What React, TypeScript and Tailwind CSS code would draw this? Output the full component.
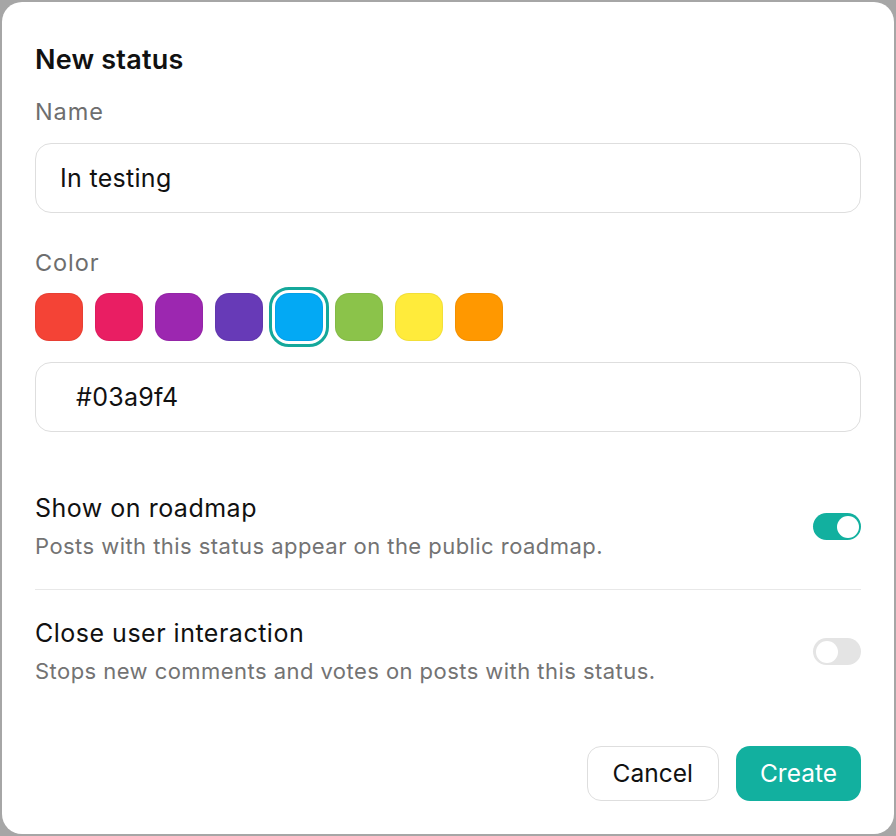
import { useState } from 'react'
import cn from 'clsx'

const swatches = ['#f44336', '#e91e63', '#9c27b0', '#673ab7', '#03a9f4', '#8bc34a', '#ffeb3b', '#ff9800']

function Toggle({ on, onChange }: { on: boolean; onChange: (v: boolean) => void }) {
  return (
    <button
      type="button"
      onClick={() => onChange(!on)}
      className={cn(
        'flex h-[27px] w-[48px] shrink-0 items-center rounded-full px-[2.5px]',
        on ? 'justify-end bg-[#12b09f]' : 'justify-start bg-[#e4e4e4]'
      )}
    >
      <span className="size-[22px] rounded-full bg-white" />
    </button>
  )
}

function SettingRow({
  title,
  description,
  on,
  onChange,
}: {
  title: string
  description: string
  on: boolean
  onChange: (v: boolean) => void
}) {
  return (
    <div className="flex items-center justify-between">
      <div className="flex flex-col gap-[9px]">
        <div className="text-[25px] leading-[30px] tracking-[0.5px] text-[#111]">{title}</div>
        <div className="text-[22px] leading-[28px] tracking-[0.45px] text-[#737373]">{description}</div>
      </div>
      <Toggle on={on} onChange={onChange} />
    </div>
  )
}

export default function App() {
  const [name, setName] = useState('In testing')
  const [color, setColor] = useState('#03a9f4')
  const [roadmap, setRoadmap] = useState(true)
  const [closed, setClosed] = useState(false)

  return (
    <div className="flex h-[836px] w-[896px] bg-[#a6a6a6] p-[2px] font-['Inter',sans-serif]">
      <div className="flex flex-1 flex-col rounded-[20px] bg-white px-[33px] pt-[42px]">
        <h2 className="text-[27px] leading-[32px] font-semibold tracking-[0.2px] text-[#111]">New status</h2>

        <label className="mt-[22px] text-[23.5px] leading-[28px] tracking-[0.9px] text-[#6e6e6e]">Name</label>
        <input
          value={name}
          onChange={(e) => setName(e.target.value)}
          className="mt-[17px] h-[70px] rounded-[16px] border border-[#dedede] px-[24px] text-[25px] tracking-[0.3px] text-[#111] outline-none"
        />

        <label className="mt-[36px] text-[23.5px] leading-[28px] tracking-[0.9px] text-[#6e6e6e]">Color</label>
        <div className="mt-[16px] flex gap-[12px]">
          {swatches.map((c) => (
            <button
              key={c}
              type="button"
              onClick={() => setColor(c)}
              style={{ backgroundColor: c }}
              className={cn(
                'size-[48px] rounded-[14px] border border-black/5',
                color === c && 'outline-[3px] outline-offset-[3px] outline-[#14a89b] outline-solid'
              )}
            />
          ))}
        </div>
        <input
          value={color}
          onChange={(e) => setColor(e.target.value)}
          className="mt-[21px] h-[70px] rounded-[16px] border border-[#dedede] px-[40px] text-[25px] tracking-[0.3px] text-[#111] outline-none"
        />

        <div className="mt-[61px]">
          <SettingRow
            title="Show on roadmap"
            description="Posts with this status appear on the public roadmap."
            on={roadmap}
            onChange={setRoadmap}
          />
        </div>
        <div className="mt-[29px] mb-[28px] h-px bg-[#e8e8e8]" />
        <SettingRow
          title="Close user interaction"
          description="Stops new comments and votes on posts with this status."
          on={closed}
          onChange={setClosed}
        />

        <div className="mt-auto mb-[33px] flex justify-end gap-[17px]">
          <button
            type="button"
            className="h-[55px] rounded-[14px] border border-[#dedede] px-[25px] text-[24.5px] text-[#111]"
          >
            Cancel
          </button>
          <button
            type="button"
            className="h-[55px] rounded-[14px] bg-[#12b09f] px-[24px] text-[24.5px] text-white"
          >
            Create
          </button>
        </div>
      </div>
    </div>
  )
}
